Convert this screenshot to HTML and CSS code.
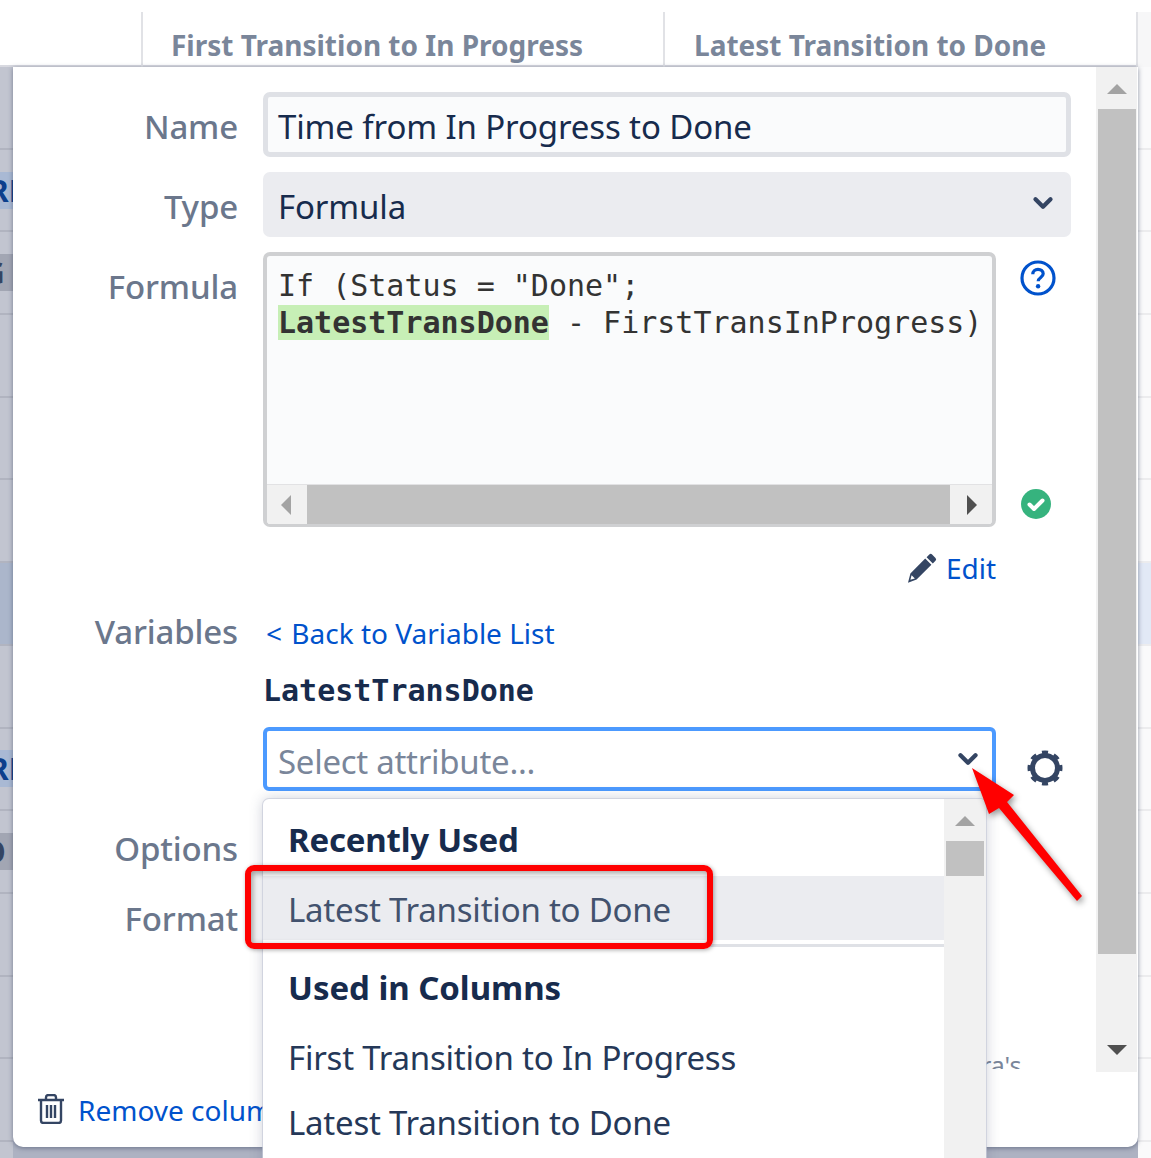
FILE: index.html
```html
<!DOCTYPE html>
<html lang="en">
<head>
<meta charset="utf-8">
<title>Time from In Progress to Done</title>
<link rel="stylesheet" href="styles.css">
</head>
<body>
<div class="page">
  <header class="table-head">
    <div class="head-cell head-first"></div>
    <div class="head-cell head-a">First Transition to In Progress</div>
    <div class="head-cell head-b">Latest Transition to Done</div>
    <div class="head-cell head-c"></div>
  </header>
  <div class="table-rows">
    <div class="left-strip">
      <div class="strip-row"></div>
      <div class="strip-row"><span class="chip chip-blue">RE</span></div>
      <div class="strip-row"><span class="chip chip-grey">G</span></div>
      <div class="strip-row"></div>
      <div class="strip-row"></div>
      <div class="strip-row"></div>
      <div class="strip-row strip-sel"></div>
      <div class="strip-row"></div>
      <div class="strip-row"><span class="chip chip-blue">RE</span></div>
      <div class="strip-row"><span class="chip chip-grey chip-o">O</span></div>
      <div class="strip-row"></div>
      <div class="strip-row"></div>
      <div class="strip-row"></div>
      <div class="strip-row"></div>
    </div>
    <div class="right-strip">
      <div class="rs-row"></div>
      <div class="rs-row"></div>
      <div class="rs-row"></div>
      <div class="rs-row"></div>
      <div class="rs-row"></div>
      <div class="rs-row"></div>
      <div class="rs-row rs-sel"></div>
      <div class="rs-row"></div>
      <div class="rs-row"></div>
      <div class="rs-row"></div>
      <div class="rs-row"></div>
      <div class="rs-row"></div>
      <div class="rs-row"></div>
      <div class="rs-row"></div>
    </div>
  </div>

  <section class="dialog">
    <div class="form">
      <div class="row row-name">
        <label class="lbl">Name</label>
        <div class="input">Time from In Progress to Done</div>
      </div>
      <div class="row row-type">
        <label class="lbl">Type</label>
        <div class="select">Formula
          <svg class="chev" viewBox="0 0 20 14"><path d="M3 3l7 7 7-7" fill="none" stroke="#344563" stroke-width="4" stroke-linecap="round" stroke-linejoin="round"/></svg>
        </div>
      </div>
      <div class="row row-formula">
        <label class="lbl">Formula</label>
        <div class="code-box">
          <div class="code-text">If (Status = "Done";<br><b class="hl">LatestTransDone</b> - FirstTransInProgress)</div>
          <div class="hscroll">
            <span class="arrow-left"></span>
            <span class="hthumb"></span>
            <span class="arrow-right"></span>
          </div>
        </div>
        <div class="code-side">
          <svg class="help" viewBox="0 0 36 36"><circle cx="18" cy="18" r="16" fill="none" stroke="#0052cc" stroke-width="3.200"/><path d="M12.800 14.200c0-3 2.300-4.900 5.200-4.900s5.200 1.900 5.200 4.500c0 3.600-5 3.700-5 7.400" fill="none" stroke="#0052cc" stroke-width="3.200"/><circle cx="18.100" cy="26.300" r="2.200" fill="#0052cc"/></svg>
          <svg class="ok" viewBox="0 0 30 30"><circle cx="15" cy="15" r="15" fill="#36b37e"/><path d="M8.500 15.500l4.500 4.500 8.500-8.500" fill="none" stroke="#fff" stroke-width="4" stroke-linecap="round" stroke-linejoin="round"/></svg>
        </div>
      </div>
      <div class="edit-row">
        <svg class="pencil" viewBox="0 0 30 30"><path d="M22.300 1.500a2 2 0 0 1 2.800 0l3.400 3.400a2 2 0 0 1 0 2.800l-2.700 2.700-6.200-6.200zM18.200 5.600l6.200 6.200L9.600 26.600 1 29.800l2.400-9.400z" fill="#344563"/><path d="M4.600 22.200l3.300 3.300-4.500 1.300z" fill="#fff"/></svg>
        <a class="link">Edit</a>
      </div>
      <div class="row row-vars">
        <label class="lbl">Variables</label>
        <a class="link back"><span class="back-mark">&lt;</span> Back to Variable List</a>
      </div>
      <div class="var-name">LatestTransDone</div>
      <div class="attr-row">
        <div class="attr-select">Select attribute...
          <svg class="chev chev-attr" viewBox="0 0 20 14"><path d="M3 3l7 7 7-7" fill="none" stroke="#344563" stroke-width="4" stroke-linecap="round" stroke-linejoin="round"/></svg>
        </div>
        <svg class="gear" viewBox="0 0 36 36"><circle cx="18" cy="18" r="12.500" fill="none" stroke="#344563" stroke-width="5"/><circle cx="18" cy="18" r="15.500" fill="none" stroke="#344563" stroke-width="4" pathLength="80" stroke-dasharray="5 5" stroke-dashoffset="2.500"/></svg>
      </div>
      <div class="row row-options"><label class="lbl">Options</label></div>
      <div class="row row-format"><label class="lbl">Format</label></div>
    </div>
    <div class="clip-text">ra's</div>
    <div class="dialog-foot">
      <svg class="trash" viewBox="0 0 28 30"><path d="M1 6h26M9 6V3.500C9 2 10 1 11.500 1h5C18 1 19 2 19 3.500V6M4 6v20.500C4 28 5 29 6.500 29h15c1.500 0 2.500-1 2.500-2.500V6M10 11v13M14 11v13M18 11v13" fill="none" stroke="#344563" stroke-width="2.400"/></svg>
      <a class="link">Remove column</a>
    </div>
    <div class="vscroll">
      <span class="up"></span>
      <span class="vthumb"></span>
      <span class="down"></span>
    </div>
  </section>

  <div class="dropdown">
    <div class="menu">
      <div class="group">Recently Used</div>
      <div class="opt opt-active">Latest Transition to Done</div>
      <div class="menu-sep"></div>
      <div class="group group-2">Used in Columns</div>
      <div class="opt">First Transition to In Progress</div>
      <div class="opt">Latest Transition to Done</div>
    </div>
    <div class="menu-scroll">
      <span class="up"></span>
      <span class="menu-thumb"></span>
    </div>
  </div>

  <div class="callout"></div>
  <svg class="red-arrow" viewBox="968 764 118 140"><path d="M972 768L1014 795 1007 802 1082 896 1077 901 999 808 989 814Z" fill="#f00"/></svg>
</div>
</body>
</html>
```
FILE: styles.css
```css
* { box-sizing: border-box; }
html, body { margin: 0; padding: 0; }
body { background: #fff; font-family: "Noto Sans", "Open Sans", sans-serif; color: #172b4d; }
.page { position: relative; width: 1151px; height: 1158px; overflow: hidden; background: #fff; }

.table-head { display: flex; height: 67px; padding-top: 12px; border-bottom: 2px solid #d8d9e0; }
.head-cell { flex: none; height: 55px; padding: 13px 0 0 28px; font-size: 28px; line-height: 40px; font-weight: 700; color: #7a869a; border-right: 2px solid #e1e2e6; white-space: nowrap; }
.head-first { width: 143px; padding: 0; }
.head-a { width: 522px; }
.head-b { width: 473px; padding-left: 29px; }
.head-c { flex: 1; padding: 0; border: 0; background: #f7f7f8; }

.table-rows { display: flex; justify-content: space-between; height: 1091px; background: #adb2c2; }
.left-strip { width: 13px; background: #c2c5d0; overflow: hidden; }
.strip-row { height: 82.7px; border-bottom: 2px solid #b1b4c0; display: flex; align-items: center; }
.strip-sel { background: #abb6cb; }
.chip { display: block; width: 13px; height: 37px; overflow: hidden; font-size: 30px; line-height: 37px; font-weight: 700; white-space: nowrap; }
.chip-blue { background: #a9b9d4; color: #0d3f8c; text-indent: -11px; }
.chip-grey { background: #a2a6b3; color: #344563; text-indent: -17px; }
.chip-o { text-indent: -18px; }
.right-strip { width: 13px; background: #fafafb; height: 1100px; }
.rs-row { height: 82.7px; border-bottom: 2px solid #ececee; }
.rs-sel { background: #e2e9f6; }

.dialog { position: absolute; left: 13px; top: 67px; width: 1125px; height: 1080px; background: #fff; border-radius: 0 0 10px 10px; box-shadow: 0 1px 5px rgba(50,60,90,.55); }
.form { width: 1085px; }
.row { display: flex; align-items: flex-start; }
.lbl { width: 225px; text-align: right; font-size: 33px; font-weight: 500; letter-spacing: -.15px; line-height: 44px; color: #6b778c; flex: none; }
.row-name { padding-top: 25px; height: 105px; }
.row-name .lbl, .row-type .lbl { margin-top: 13px; }
.input, .select { margin-left: 25px; width: 808px; height: 65px; border-radius: 7px; font-size: 33px; letter-spacing: -.12px; padding-left: 15px; color: #172b4d; }
.input { border: 5px solid #dfe1e6; background: #fafbfc; padding-left: 10px; line-height: 59px; }
.select { background: #ebecf0; position: relative; line-height: 69px; }
.row-type { height: 80px; }
.chev { position: absolute; right: 17px; top: 24px; width: 22px; height: 15px; }
.row-formula { height: 287px; }
.row-formula .lbl { margin-top: 13px; }
.code-box { margin-left: 25px; width: 733px; height: 275px; border: 4px solid #cfd0d2; border-bottom-width: 3px; border-radius: 7px; background: #fafbfc; display: flex; flex-direction: column; overflow: hidden; }
.code-text { flex: 1; padding: 11px 0 0 11px; font-family: "DejaVu Sans Mono", monospace; font-size: 30px; line-height: 37px; color: #333; white-space: nowrap; }
.hl { background: #c7efb6; }
.hscroll { height: 40px; background: #f1f1f1; border-top: 1px solid #e2e2e4; display: flex; align-items: center; }
.arrow-left { width: 0; height: 0; margin-left: 14px; border: 10px solid transparent; border-left: 0; border-right: 10px solid #a3a3a3; }
.hthumb { width: 643px; height: 39px; margin-left: 16px; background: #c1c1c1; }
.arrow-right { width: 0; height: 0; margin-left: 17px; border: 10px solid transparent; border-right: 0; border-left: 10px solid #505050; }
.code-side { width: 50px; margin-left: 19px; position: relative; height: 275px; }
.help { position: absolute; left: 5px; top: 8px; width: 36px; height: 36px; }
.ok { position: absolute; left: 6px; top: 237px; width: 30px; height: 30px; }
.edit-row { display: flex; justify-content: flex-end; align-items: center; gap: 9px; width: 983px; height: 30px; margin-top: 14px; }
.pencil { width: 30px; height: 30px; flex: none; }
.link { color: #0052cc; font-size: 28px; line-height: 36px; white-space: nowrap; }
.row-vars { margin-top: 28px; height: 44px; }
.row-vars .lbl { margin-top: -1px; }
.back { margin-left: 28px; line-height: 44px; }
.back-mark { margin-right: 2px; }
.var-name { margin: 16px 0 0 250px; font-family: "DejaVu Sans Mono", monospace; font-weight: 700; font-size: 30px; line-height: 40px; color: #172b4d; }
.attr-row { display: flex; margin: 16px 0 0 250px; align-items: center; }
.attr-select { position: relative; width: 733px; height: 64px; border: 4px solid #4c9aff; border-radius: 6px; background: #fff; font-size: 33px; letter-spacing: -.28px; line-height: 62px; padding-left: 11px; color: #7a869a; }
.chev-attr { right: 13px; top: 21px; }
.gear { width: 36px; height: 36px; margin-left: 31px; margin-top: 18px; }
.row-options { margin-top: 36px; height: 70px; }

.clip-text { position: absolute; left: 968px; top: 980px; height: 22px; overflow: hidden; font-size: 25px; line-height: 36px; color: #7a869a; }
.dialog-foot { position: absolute; left: 25px; top: 1023px; display: flex; align-items: center; gap: 13px; height: 40px; width: 225px; overflow: hidden; }
.trash { width: 28px; height: 30px; flex: none; margin: -3px 0 0 -1px; }

.vscroll { position: absolute; right: 1px; top: 0; width: 41px; height: 1005px; background: #f1f1f1; display: flex; flex-direction: column; align-items: center; }
.up { display: block; width: 0; height: 0; border: 10px solid transparent; border-top: 0; border-bottom: 10px solid #a3a3a3; margin-top: 17px; flex: none; }
.vthumb { display: block; width: 38px; height: 845px; background: #c1c1c1; margin-top: 15px; }
.down { display: block; width: 0; height: 0; border: 10px solid transparent; border-bottom: 0; border-top: 10px solid #505050; margin-top: 91px; }

.dropdown { position: absolute; left: 263px; top: 799px; width: 723px; height: 400px; background: #fff; border-radius: 6px 6px 0 0; box-shadow: 0 0 0 1px rgba(200,204,218,.7), 0 0 14px rgba(80,90,120,.3); display: flex; overflow: hidden; }
.menu { width: 681px; flex: none; }
.group { padding-left: 25px; font-weight: 700; font-size: 33px; letter-spacing: -.2px; line-height: 44px; height: 77px; padding-top: 19px; color: #172b4d; }
.group-2 { height: 77px; padding-top: 19px; letter-spacing: -.05px; }
.opt { padding-left: 25px; font-size: 33px; letter-spacing: -.22px; height: 65px; line-height: 68px; color: #253858; }
.opt-active { background: #ebecf0; color: #42526e; height: 64px; line-height: 67px; }
.menu-sep { height: 3px; margin-top: 4px; background: #dfe1e6; }
.menu-scroll { width: 42px; background: #f1f1f1; display: flex; flex-direction: column; align-items: center; }
.menu-thumb { display: block; width: 38px; height: 35px; background: #c1c1c1; margin-top: 15px; }

.callout { position: absolute; left: 245px; top: 865px; width: 468px; height: 84px; border: 6px solid #f00; border-radius: 9px; box-shadow: 1px 1px 4px rgba(0,0,0,.35), inset 2px 2px 6px rgba(0,0,0,.4); }
.red-arrow { position: absolute; left: 968px; top: 764px; width: 118px; height: 140px; filter: drop-shadow(2px 3px 3px rgba(0,0,0,.4)); }
```
